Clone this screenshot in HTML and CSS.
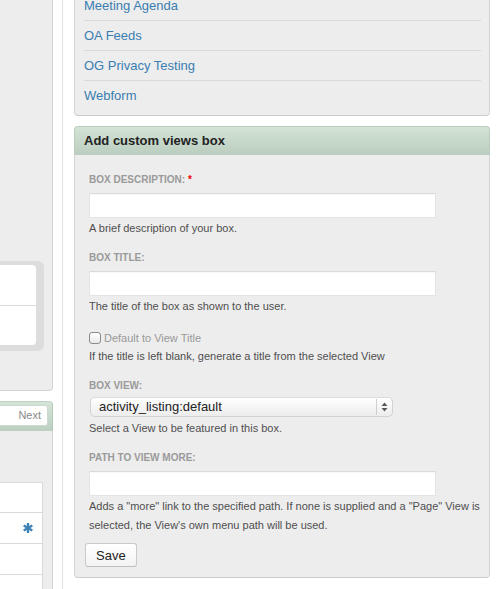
FILE: index.html
```html
<!DOCTYPE html>
<html lang="en">
<head>
<meta charset="utf-8">
<title>Add custom views box</title>
<link rel="stylesheet" href="styles.css">
</head>
<body>
<div class="page">
  <aside class="side">
    <div class="side-top">
      <div class="side-group">
        <div class="side-cells">
          <div class="side-cell"></div>
          <div class="side-cell"></div>
        </div>
      </div>
    </div>
    <div class="pager">
      <div class="pager-head"><span class="next">Next</span></div>
      <div class="pager-body">
        <div class="ptable">
          <div class="prow first"></div>
          <div class="prow">
            <svg class="star" width="10" height="10" viewBox="0 0 10 10" aria-hidden="true">
              <g stroke="#3f83b6" stroke-width="2.4" stroke-linecap="butt">
                <line x1="5" y1="0" x2="5" y2="10"/>
                <line x1="0.7" y1="2.5" x2="9.3" y2="7.5"/>
                <line x1="0.7" y1="7.5" x2="9.3" y2="2.5"/>
              </g>
            </svg>
          </div>
          <div class="prow"></div>
          <div class="prow"></div>
        </div>
      </div>
    </div>
  </aside>
  <div class="divider"></div>
  <main class="main">
    <div class="box links-box">
      <ul>
        <li><a href="#">Meeting Agenda</a></li>
        <li><a href="#">OA Feeds</a></li>
        <li><a href="#">OG Privacy Testing</a></li>
        <li><a href="#">Webform</a></li>
      </ul>
    </div>
    <section class="form-box">
      <h2 class="box-head">Add custom views box</h2>
      <form class="box-body">
        <div class="item">
          <label class="lbl">Box description: <span class="req">*</span></label>
          <input class="text" type="text">
          <div class="desc">A brief description of your box.</div>
        </div>
        <div class="item">
          <label class="lbl">Box title:</label>
          <input class="text" type="text">
          <div class="desc">The title of the box as shown to the user.</div>
        </div>
        <div class="item">
          <label class="check"><input class="cb" type="checkbox"><span>Default to View Title</span></label>
          <div class="desc tight">If the title is left blank, generate a title from the selected View</div>
        </div>
        <div class="item">
          <label class="lbl">Box view:</label>
          <div class="select-wrap">
            <select class="select"><option>activity_listing:default</option></select>
            <span class="select-arrow">
              <svg width="7" height="10" viewBox="0 0 7 10" aria-hidden="true">
                <path d="M3.5 0.5 L6.5 4 L0.5 4 Z" fill="#5a5a5a"/>
                <path d="M0.5 6 L6.5 6 L3.5 9.5 Z" fill="#5a5a5a"/>
              </svg>
            </span>
          </div>
          <div class="desc after-select">Select a View to be featured in this box.</div>
        </div>
        <div class="item last">
          <label class="lbl">Path to view more:</label>
          <input class="text" type="text">
          <div class="desc">Adds a "more" link to the specified path. If none is supplied and a "Page" View is selected, the View's own menu path will be used.</div>
        </div>
        <button class="save" type="button">Save</button>
      </form>
    </section>
  </main>
</div>
</body>
</html>
```

FILE: styles.css
```css
* { box-sizing: border-box; }
html, body { margin: 0; padding: 0; }
body {
  background: #fff;
  font-family: "Liberation Sans", Arial, Helvetica, sans-serif;
  width: 503px;
  height: 589px;
  overflow: hidden;
}
.page { display: flex; align-items: flex-start; height: 589px; }

/* left column */
.side { width: 53px; flex: none; }
.side-top {
  height: 391px;
  background: #ededed;
  border-right: 1px solid #d4d4d4;
  border-bottom: 1px solid #d4d4d4;
  border-bottom-right-radius: 4px;
  padding-top: 261px;
}
.side-group {
  width: 44px;
  height: 90px;
  background: #dddddd;
  border-radius: 0 6px 6px 0;
  padding: 4px 8px 6px 0;
}
.side-cells { background: #fff; border-radius: 0 4px 4px 0; height: 80px; }
.side-cell { height: 41px; border-bottom: 1px solid #dadada; }
.side-cell:last-child { height: 39px; border-bottom: 0; }

.pager { margin-top: 10px; }
.pager-head {
  height: 30px;
  background: linear-gradient(#d4e4d7, #bccfc0);
  border-top: 1px solid #bfd2c3;
  border-right: 1px solid #b5c9b9;
  border-top-right-radius: 4px;
  padding: 3px 4px 0 0;
}
.next {
  display: block;
  width: 48px;
  height: 21px;
  background: #fff;
  border: 1px solid #cdd8cf;
  border-left: 0;
  border-radius: 0 3px 3px 0;
  font-size: 11px;
  line-height: 19px;
  color: #888;
  text-align: right;
  padding-right: 6px;
}
.pager-body {
  height: 170px;
  background: #ededed;
  border-right: 1px solid #d4d4d4;
  padding-top: 51px;
}
.ptable {
  width: 43px;
  background: #fff;
  border-top: 1px solid #dadada;
  border-right: 1px solid #dadada;
}
.prow {
  height: 31px;
  border-bottom: 1px solid #dadada;
  display: flex;
  align-items: center;
  justify-content: flex-end;
  padding-right: 9px;
}
.prow.first { height: 30px; }
.star { display: block; }

.divider {
  width: 1px;
  flex: none;
  align-self: stretch;
  background: #e2e2e2;
  margin-left: 9px;
}

/* main column */
.main { width: 416px; flex: none; margin-left: 11px; margin-top: -10px; }
.box {
  background: #ededed;
  border: 1px solid #d4d4d4;
  border-bottom-color: #cbcbcb;
  border-radius: 4px;
}
.links-box ul { list-style: none; margin: 0; padding: 0 8px 5px 9px; }
.links-box li {
  height: 30px;
  line-height: 29px;
  font-size: 13px;
  border-bottom: 1px solid #d9d9d9;
}
.links-box li:last-child { height: 29px; border-bottom: 0; }
.links-box a { color: #3a7db1; text-decoration: none; }

.form-box { margin-top: 10px; }
.box-head {
  margin: 0;
  height: 29px;
  background: linear-gradient(#d4e4d7, #bacdbe);
  border: 1px solid #b9cdbd;
  border-bottom: 0;
  border-radius: 4px 4px 0 0;
  font-size: 13px;
  font-weight: bold;
  line-height: 27px;
  color: #222;
  padding-left: 9px;
}
.box-body {
  margin: 0;
  background: #ededed;
  border: 1px solid #d4d4d4;
  border-top: 0;
  border-bottom-color: #cbcbcb;
  border-radius: 0 0 4px 4px;
  padding: 18px 1px 10px 14px;
}
.item { margin-bottom: 13px; }
.item.last { margin-bottom: 0; }
.lbl {
  display: block;
  font-size: 10px;
  font-weight: bold;
  line-height: 14px;
  color: #9a9a9a;
  text-transform: uppercase;
  margin-bottom: 6px;
}
.req { color: #e00; }
.text {
  display: block;
  width: 347px;
  height: 25px;
  margin: 0;
  padding: 2px 4px;
  background: #fff;
  border: 1px solid #e4e4e4;
  border-top-color: #dadada;
  border-radius: 0;
  box-shadow: inset 0 1px 1px rgba(0, 0, 0, 0.03);
  font: 13px "Liberation Sans", Arial, sans-serif;
  outline: none;
}
.desc {
  font-size: 11px;
  line-height: 19px;
  color: #4f4f4f;
  margin-top: 1px;
}
.desc.tight { margin-top: 0; }
.desc.after-select { margin-top: 2px; }

.check {
  display: flex;
  align-items: center;
  height: 18px;
  font-size: 11px;
  color: #999;
}
.cb {
  -webkit-appearance: none;
  appearance: none;
  width: 12px;
  height: 12px;
  margin: 0 3px 0 0;
  border: 1px solid #8c8c8c;
  border-radius: 3px;
  background: linear-gradient(#ffffff, #e9e9e9);
}

.select-wrap {
  position: relative;
  width: 303px;
  height: 20px;
  margin: -2px 0 0 1px;
}
.select {
  -webkit-appearance: none;
  appearance: none;
  display: block;
  width: 303px;
  height: 20px;
  margin: 0;
  padding: 0 20px 0 8px;
  border: 1px solid #d2d2d2;
  border-top-color: #dcdcdc;
  border-radius: 5px;
  background: linear-gradient(#ffffff, #f6f6f6 50%, #ececec);
  font: 13px "Liberation Sans", Arial, sans-serif;
  line-height: 18px;
  color: #222;
  outline: none;
}
.select-arrow {
  position: absolute;
  top: 2px;
  right: 1px;
  width: 16px;
  height: 16px;
  border-left: 1px solid #cfcfcf;
  display: flex;
  align-items: center;
  justify-content: center;
}
.select-arrow svg { display: block; }

.save {
  display: block;
  margin: 8px 0 0 -4px;
  height: 24px;
  padding: 0 10px;
  font: 13px "Liberation Sans", Arial, sans-serif;
  color: #222;
  background: linear-gradient(#ffffff, #f3f3f3);
  border: 1px solid #cacaca;
  border-bottom-color: #bdbdbd;
  border-radius: 3px;
}
```
